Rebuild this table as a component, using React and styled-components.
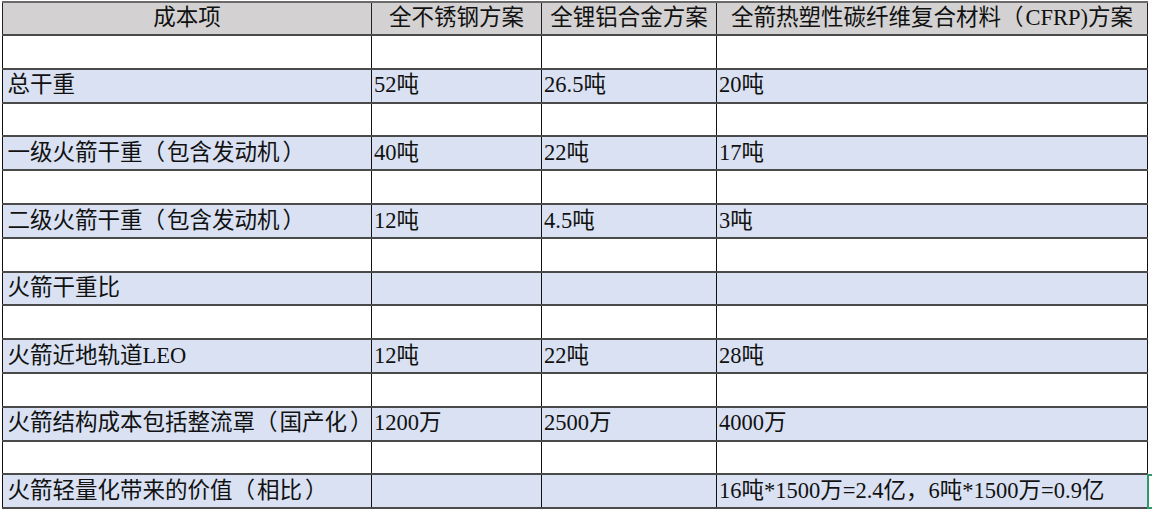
import React from "react";
import styled, { createGlobalStyle } from "styled-components";

const GlobalStyle = createGlobalStyle`
  html, body { margin: 0; padding: 0; background: #ffffff; }
  body {
    font-family: "Liberation Serif", "Noto Sans CJK SC", serif;
    width: 1152px;
    height: 512px;
    overflow: hidden;
  }
`;

const Sheet = styled.div`
  position: relative;
  padding: 1px 0 0 2px;
  width: 1152px;
  height: 512px;
  box-sizing: border-box;
`;

const Table = styled.table`
  border-collapse: collapse;
  table-layout: fixed;
  width: 1145px;
  font-family: "Liberation Serif", "Noto Sans CJK SC", serif;
  font-size: 22.5px;
  color: #111;
`;

const HeadCell = styled.th`
  height: 31px;
  padding: 0;
  font-weight: 400;
  text-align: center;
  white-space: nowrap;
  background: #d3d1d1;
  border-top: 2px solid #6a6a6a;
  border-bottom: 2px solid #4a4a4a;
  border-left: 1px solid #222;
  border-right: 1px solid #222;
  line-height: 1;
`;

const Row = styled.tr`
  height: 33.8px;
  background: ${(p) => (p.$striped ? "#d9e1f2" : "#ffffff")};
`;

const Cell = styled.td`
  padding: 0 0 0 ${(p) => (p.$label ? "4.5px" : "2px")};
  white-space: nowrap;
  overflow: visible;
  border-top: 2px solid #4a4a4a;
  border-bottom: 2px solid #4a4a4a;
  border-left: 1px solid #111;
  border-right: 1px solid #111;
  line-height: 1;
  vertical-align: middle;
`;

const Paren = styled.span`
  margin-left: ${(p) => (p.$close ? "3px" : "0")};
  margin-right: ${(p) => (p.$close ? "-4px" : "2px")};
`;

const Selection = styled.div`
  position: absolute;
  left: 1147px;
  top: 474px;
  width: 40px;
  height: 31px;
  border: 2px solid #2f9a67;
`;

function Txt({ text }) {
  const parts = text.split(/([（）])/);
  return parts.map((p, i) =>
    p === "（" || p === "）" ? (
      <Paren key={i} $close={p === "）"}>
        {p}
      </Paren>
    ) : (
      p
    )
  );
}

const headers = [
  "成本项",
  "全不锈钢方案",
  "全锂铝合金方案",
  "全箭热塑性碳纤维复合材料（CFRP)方案",
];

const rows = [
  ["", "", "", ""],
  ["总干重", "52吨", "26.5吨", "20吨"],
  ["", "", "", ""],
  ["一级火箭干重（包含发动机）", "40吨", "22吨", "17吨"],
  ["", "", "", ""],
  ["二级火箭干重（包含发动机）", "12吨", "4.5吨", "3吨"],
  ["", "", "", ""],
  ["火箭干重比", "", "", ""],
  ["", "", "", ""],
  ["火箭近地轨道LEO", "12吨", "22吨", "28吨"],
  ["", "", "", ""],
  ["火箭结构成本包括整流罩（国产化）", "1200万", "2500万", "4000万"],
  ["", "", "", ""],
  ["火箭轻量化带来的价值（相比）", "", "", "16吨*1500万=2.4亿，6吨*1500万=0.9亿"],
];

const widths = [369, 170, 175, 431];

export default function App() {
  return (
    <>
      <GlobalStyle />
      <Sheet>
        <Table>
          <colgroup>
            {widths.map((w, i) => (
              <col key={i} style={{ width: w }} />
            ))}
          </colgroup>
          <thead>
            <tr>
              {headers.map((h, i) => (
                <HeadCell key={i}>
                  <Txt text={h} />
                </HeadCell>
              ))}
            </tr>
          </thead>
          <tbody>
            {rows.map((r, ri) => (
              <Row key={ri} $striped={ri % 2 === 1}>
                {r.map((c, ci) => (
                  <Cell key={ci} $label={ci === 0}>
                    <Txt text={c} />
                  </Cell>
                ))}
              </Row>
            ))}
          </tbody>
        </Table>
        <Selection />
      </Sheet>
    </>
  );
}
